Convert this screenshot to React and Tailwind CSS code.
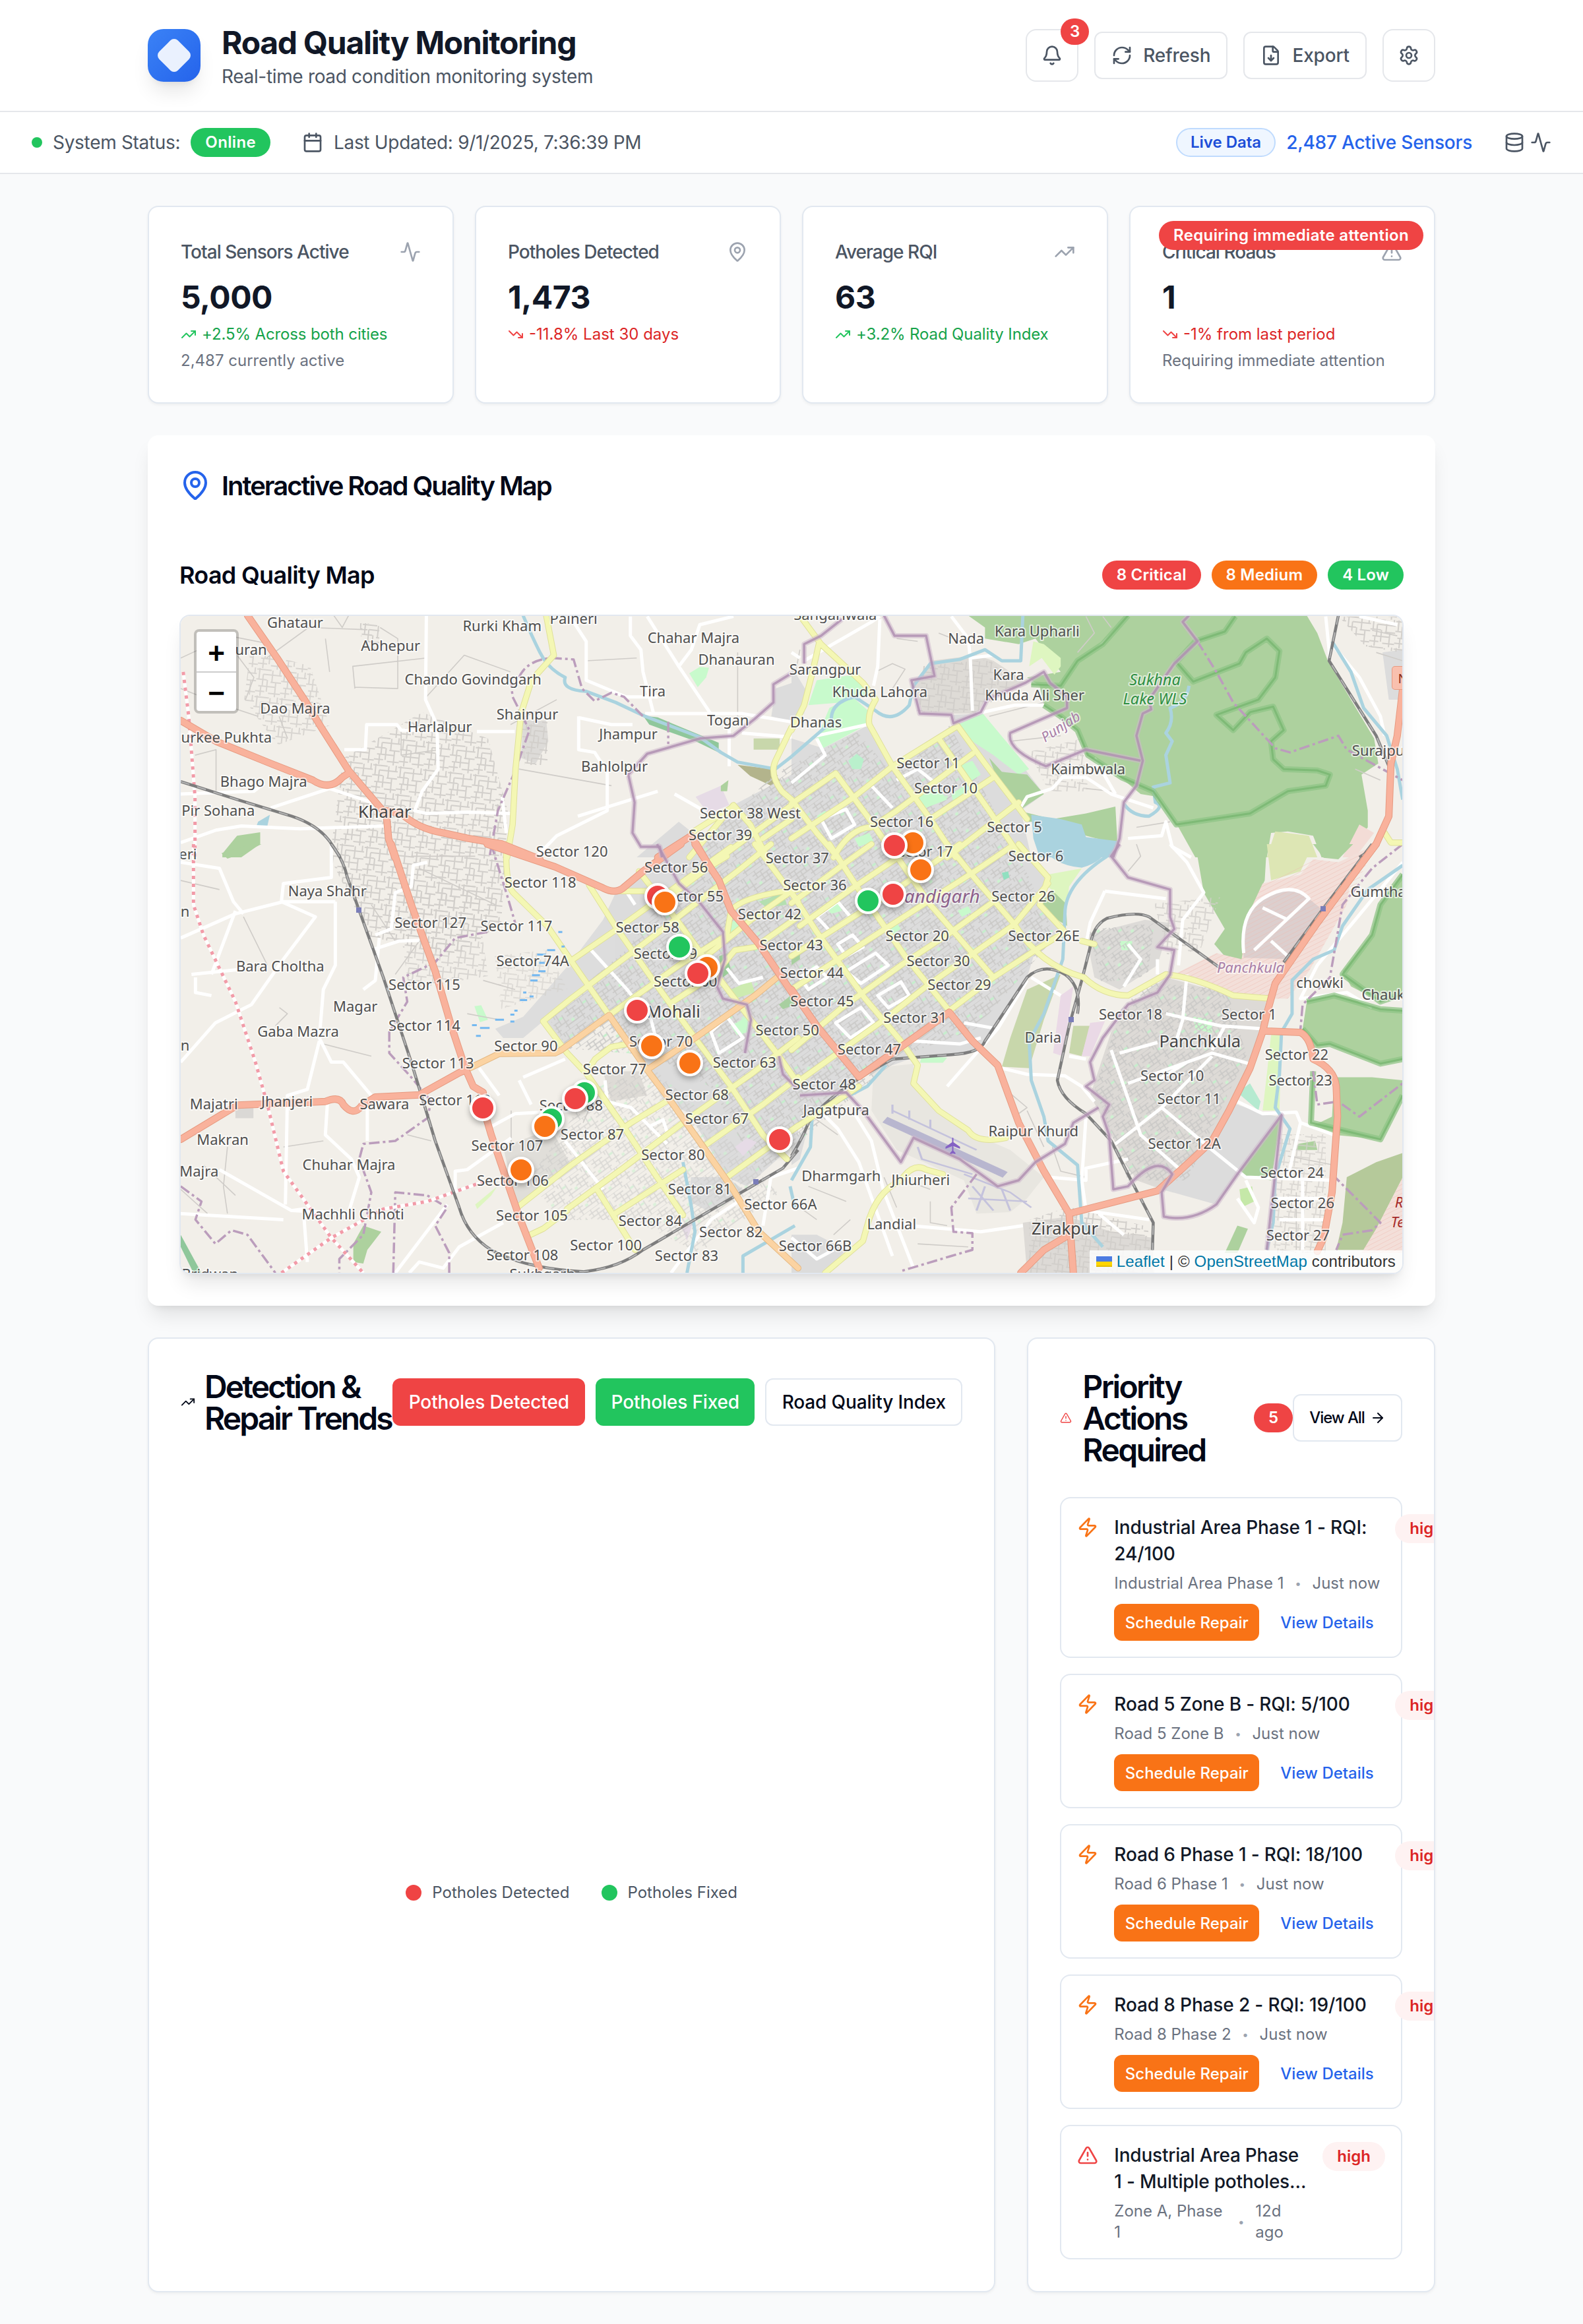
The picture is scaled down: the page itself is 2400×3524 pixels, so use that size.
import React from "react";
import {
  Activity, ArrowRight, Bell, Calendar, Database, FileDown, MapPin, RefreshCw,
  Settings, TrendingDown, TrendingUp, TriangleAlert, Zap,
} from "lucide-react";

/* Map sheets: each has its own local grid, [x origin, y origin, x scale, y scale]. */
const SHEETS = {
  nw: [200, 640, 1000 / 1568, 660 / 1568],
  ne: [1200, 640, 1000 / 1568, 660 / 1568],
  sw: [260, 1280, 950 / 1568, 720 / 1568],
  se: [1200, 1280, 1000 / 1568, 720 / 1568],
};

const AREAS = {
  nw: [
    ["M930 1075 L985 1075 L990 1150 L960 1230 L925 1210 Z", "#dddbd8"],
    ["M215 1555 L250 1490 L305 1478 L305 1520 L260 1568 L215 1568 Z", "#add19e"],
    ["M300 1440 L328 1415 L322 1455 L296 1455 Z", "#aad3df"],
    ["M1215 1058 L1250 1064 L1395 1155 L1395 1190 L1340 1150 L1230 1090 Z", "#8fc79b"],
    ["M1325 905 L1350 882 L1372 885 L1365 920 L1345 955 Z", "#c8facc"],
    ["M1440 1235 L1520 1250 L1550 1310 L1520 1310 L1470 1275 Z", "#b3b48c"],
    ["M1478 1140 L1540 1140 L1540 1180 L1478 1180 Z", "#c8d7ab"],
    ["M1340 1350 L1400 1310 L1420 1380 L1370 1410 Z", "#e6dbe6"],
    ["M1400 1310 L1418 1290 L1415 1330 L1400 1330 Z", "#add19e"],
    ["M1200 1568 L1300 1440 L1350 1500 L1430 1380 L1568 1270 L1568 1568 Z", "#dcdcdc"],
    ["M1530 960 L1568 940 L1568 1080 L1520 1060 Z", "#dcdcdc"],
  ],
  ne: [
    ["M0 1140 L75 1175 L185 1090 L240 1230 L385 1090 L380 1055 L455 1050 L600 1340 L545 1400 L570 1568 L0 1568 Z", "#dcdcdc"],
    ["M320 900 L330 860 L440 840 L480 860 L560 940 L460 1000 L440 1050 L310 1050 L290 930 Z", "#dedbd6"],
    ["M0 880 L40 980 L30 1050 L0 1060 Z", "#dcdcdc"],
    ["M800 697 L740 800 L680 860 L640 950 L590 950 L600 1020 L680 1110 L700 1200 L750 1240 L790 1290 L830 1340 L870 1350 L890 1400 L920 1460 L960 1568 L1130 1568 L1140 1480 L1180 1475 L1240 1490 L1260 1568 L1300 1568 L1340 1520 L1370 1460 L1370 1400 L1355 1270 L1395 1230 L1385 1140 L1330 1000 L1275 860 L1250 760 L1225 697 Z", "#add19e"],
    ["M420 697 L460 740 L460 780 L540 800 L580 780 L620 860 L640 900 L560 920 L590 950 L640 950 L700 850 L760 760 L800 697 Z", "#add19e"],
    ["M575 790 L600 800 L640 850 L640 880 L625 910 L595 850 L565 880 Z", "#def6c0"],
    ["M40 1020 L60 930 L150 910 L200 990 Q150 980 120 1010 Z", "#c8facc"],
    ["M75 1175 L60 1140 L90 1030 L145 990 L190 1050 L180 1090 Z", "#c8facc"],
    ["M395 1090 L455 1050 L565 1250 L540 1270 L480 1200 L410 1130 Z", "#c8facc"],
    ["M470 1210 L500 1260 L560 1270 L600 1340 L540 1400 L520 1360 L490 1290 Z", "#add19e"],
    ["M540 1400 L620 1430 L700 1410 L770 1385 L775 1520 L700 1490 L640 1440 L560 1440 Z", "#add19e"],
    ["M570 1415 L575 1500 L590 1568 L760 1568 L775 1510 L700 1495 L690 1450 L640 1430 Z", "#aad3df"],
    ["M1150 1475 L1230 1490 L1250 1568 L1130 1568 Z", "#dde6b4"],
    ["M1350 1450 L1385 1480 L1340 1568 L1310 1568 Z", "#f3dcd6"],
    ["M1405 830 L1453 820 L1453 1000 L1420 1000 Z", "#dcdcdc"],
  ],
  sw: [
    ["M1115 150 L1250 0 L1568 0 L1568 980 L1440 1130 L1390 1100 L1300 900 L1200 745 L1095 565 L975 680 L930 585 L1110 385 L1080 250 Z", "#dcdcdc"],
    ["M810 610 L880 570 L1000 390 L1080 250 L1110 280 L1110 385 L930 585 L880 640 L830 640 Z", "#dddddd"],
    ["M1200 750 L1290 750 L1400 800 L1430 870 L1310 900 L1240 850 Z", "#dcdcdc"],
    ["M1080 750 L1170 750 L1190 830 L1100 850 Z", "#dedbd6"],
    ["M1300 1100 L1390 1100 L1430 1140 L1340 1210 L1295 1180 Z", "#dcdcdc"],
    ["M830 1000 L950 940 L1000 1060 L865 1200 Z", "#e0ded9"],
    ["M160 870 L205 870 L205 905 L160 905 Z", "#dad8d5"],
    ["M125 30 L200 0 L225 0 L180 30 L140 48 Z", "#add19e"],
    ["M480 1260 L525 1280 L490 1340 L480 1385 L455 1380 L455 1320 Z", "#add19e"],
    ["M758 535 L775 532 L792 580 L772 588 Z", "#c8facc"],
    ["M760 1190 L815 1130 L800 1160 L765 1205 Z", "#def6c0"],
    ["M23 1290 L75 1416 L55 1416 L23 1330 Z", "#8fc79b"],
    ["M1275 1260 L1305 1250 L1290 1310 Z", "#e6dbe6"],
  ],
  se: [
    ["M0 0 L540 0 L610 120 L590 200 L650 290 L580 350 L560 440 L470 640 L430 690 L300 700 L160 770 L0 960 Z", "#dcdcdc"],
    ["M700 300 L840 250 L900 260 L870 400 L780 480 L720 440 Z", "#dddbd8"],
    ["M890 440 L1050 500 L1130 510 L1110 640 L1080 760 L1040 880 L980 1000 L880 1140 L820 1110 L760 960 L710 830 L760 620 L800 540 Z", "#dddad6"],
    ["M1040 850 L1120 890 L1160 900 L1100 1020 L1060 1100 L1010 1190 L880 1140 L990 1000 Z", "#dcdcdc"],
    ["M1165 900 L1060 1090 L1140 1110 Z", "#add19e"],
    ["M0 980 L40 930 L20 1040 L0 1060 Z", "#dcdcdc"],
    ["M550 1250 L660 1230 L760 1280 L860 1300 L860 1416 L560 1416 Z", "#dddad6"],
    ["M0 1290 L60 1290 L130 1340 L80 1416 L0 1416 Z", "#dcdcdc"],
    ["M195 740 L290 725 L290 790 L350 880 L420 950 L520 1010 L600 1100 L560 1170 L520 1215 L440 1220 L410 1110 L250 1010 L190 880 Z", "#e8e6e0"],
    ["M960 0 L1130 0 L1125 120 L1090 220 L1085 280 L1070 390 L1030 370 L1005 330 L1030 280 L980 160 Z", "#add19e"],
    ["M1130 0 L1240 0 L1210 90 L1140 120 Z", "#dde6b4"],
    ["M1390 0 L1300 60 L1240 50 L1210 100 L1120 130 L1090 220 L1070 380 L1010 360 L910 430 L1060 510 L1180 510 L1230 420 L1320 200 L1330 100 Z", "#f3dfd9"],
    ["M1240 0 L1335 0 L1300 50 L1265 45 Z", "#add19e"],
    ["M1075 375 Q1065 230 1120 180 Q1190 120 1230 180 L1265 220 L1180 380 Z", "#dccfce"],
    ["M1453 100 L1400 200 L1380 300 L1310 420 L1330 470 L1400 520 L1453 500 Z", "#add19e"],
    ["M1225 520 L1290 500 L1350 520 L1400 545 L1453 550 L1453 710 L1400 725 L1280 660 L1250 665 L1215 610 Z", "#add19e"],
    ["M1290 770 L1380 770 L1453 780 L1453 830 L1430 900 L1400 975 L1290 960 L1240 930 L1285 900 Z", "#add19e"],
    ["M1453 1020 L1390 1050 L1320 1100 L1310 1250 L1295 1340 L1365 1340 L1453 1100 Z", "#b5c99a"],
    ["M1453 1100 L1390 1270 L1355 1350 L1453 1350 Z", "#f3dfd9"],
    ["M590 200 L650 100 L655 270 L620 240 Z", "#add19e"],
    ["M610 100 L690 80 L660 140 L655 200 L610 140 Z", "#def6c0"],
    ["M560 480 L640 430 L600 580 L565 740 L500 735 L520 640 Z", "#c8d7ab"],
    ["M670 600 L710 600 L690 700 L660 690 Z", "#c8d7ab"],
    ["M710 590 L745 585 L710 700 L690 700 Z", "#ead9e6"],
    ["M640 500 L670 470 L645 700 L622 690 Z", "#ead9e6"],
    ["M1140 630 L1165 630 L1160 880 L1120 880 L1130 760 Z", "#def6c0"],
    ["M1060 820 L1090 790 L1115 850 L1110 880 Z", "#b5ead0"],
    ["M1205 990 L1245 980 L1250 1010 L1200 1010 Z", "#add19e"],
    ["M1060 1260 L1085 1270 L1060 1350 L1030 1350 Z", "#add19e"],
    ["M955 570 L1000 580 L1000 625 L960 610 Z", "#c8facc"],
    ["M780 320 L810 320 L810 350 L785 350 Z", "#c8facc"],
    ["M1065 1140 L1095 1130 L1100 1180 L1070 1200 Z", "#c5e8a8"],
    ["M310 700 L370 705 L360 722 L305 722 Z", "#c8facc"],
    ["M590 0 Q620 70 690 78 Q740 60 760 0 Z", "#aad3df"],
  ],
};

/* Parks that lie on top of the street texture. */
const PARKS = {
  ne: [
    ["M395 1240 L430 1220 L450 1270 L420 1300 Z", "#c8facc"],
    ["M290 1350 L350 1320 L370 1360 L310 1395 Z", "#c8facc"],
    ["M380 1340 L420 1300 L435 1330 L385 1370 Z", "#c8facc"],
    ["M135 1220 L155 1195 L172 1215 L165 1250 L145 1250 Z", "#b9f0cc"],
    ["M150 1500 L185 1480 L195 1510 L160 1530 Z", "#c8facc"],
    ["M60 1420 L80 1400 L90 1420 L70 1440 Z", "#c8facc"],
  ],
  sw: [
    ["M1400 480 L1450 450 L1460 490 L1410 510 Z", "#cdebb0"],
    ["M1400 600 L1440 570 L1445 620 L1415 630 Z", "#c8facc"],
    ["M1370 370 L1390 360 L1400 420 L1380 440 Z", "#9ccd9a"],
    ["M1390 270 L1420 240 L1430 270 L1395 310 Z", "#c8facc"],
    ["M1470 190 L1530 160 L1540 200 L1490 210 Z", "#b4dfb0"],
    ["M1520 530 L1550 500 L1560 530 L1530 545 Z", "#a8cfa0"],
    ["M1410 1000 L1440 970 L1465 985 L1430 1030 Z", "#e6dbe6"],
  ],
  se: [
    ["M80 210 L110 195 L120 220 L95 230 Z", "#c8facc"],
    ["M310 170 L340 150 L350 180 L325 195 Z", "#c8facc"],
    ["M500 95 L515 90 L518 110 L505 118 Z", "#90e0c0"],
    ["M225 280 L250 260 L260 280 L238 300 Z", "#c8facc"],
    ["M395 220 L420 205 L428 225 L405 240 Z", "#c8facc"],
    ["M0 380 L20 360 L20 380 L0 400 Z", "#a8cfa0"],
  ],
};

const LAYERS = [
  {
    color: "#cfccc8", width: 1.6,
    d: {
      nw: "M116 850 L230 770 L330 800 M320 850 L420 740 L560 748 M480 697 L500 740 L515 697 M590 740 L632 780 L632 960 L530 955 M530 960 L525 880 L700 850 M700 990 L790 840 L900 900 M1010 1000 L900 1090 M920 1250 L1140 1310 M116 960 L200 1010 L300 1060 M150 1200 L200 1180 L200 1330 M640 1110 L640 1200 L730 1180 M1080 860 L1200 850 M1440 830 L1440 1060 M250 840 L290 920 L270 1000 M350 1060 L370 1140 M460 780 L470 900",
      sw: "M23 120 L120 150 M180 240 L240 400 M260 600 L290 560 L270 540 M380 660 L500 700 M140 1000 L130 1130 L140 1220 M620 320 L560 430 M740 560 L820 580 M780 450 L860 480 M850 880 L850 1000 M590 960 L650 980 M80 1060 L160 1160 M280 1000 L380 980 M23 1140 L90 1220 M600 40 L760 40 M620 80 L810 200 M500 200 L560 320 M1000 850 L1050 860 L1030 920",
      se: "M40 1130 L130 1180 M30 880 L110 960 M220 1100 L250 1200 M290 1120 L330 1140 M560 880 L600 1000 M300 1320 L420 1330 M820 0 L830 40 L800 90 M620 1000 L640 1080 L700 1100 M330 1180 L330 1250 L370 1260 M1180 1030 L1290 1060 M1200 1150 L1200 1340 M0 1180 L60 1240 M100 1290 L140 1240 M500 800 L560 870 L530 900",
      ne: "M20 820 L10 900 M200 900 L240 870 L270 890 L240 960 M250 780 L300 790 M350 760 L400 790 M470 1060 L600 1010 M520 1150 L640 1130 M700 700 L720 760 L680 830 M740 700 L760 740 M1380 750 L1440 770 M1390 830 L1453 860 M1340 1250 L1400 1290 M700 1320 L760 1330 M820 1460 L900 1440",
    },
  },
  {
    color: "#ffffff", width: 5,
    d: {
      nw: "M700 697 L698 1000 L722 1080 M505 1180 L555 1180 L558 1090 L630 1090 L640 1110 L725 1110 M820 1115 L910 1115 M725 1080 L728 1250 L690 1330 L672 1400 L700 1410 L800 1405 M800 1405 L900 1410 M116 1515 L200 1470 L260 1455 L400 1465 L600 1455 M116 1340 L290 1330 L315 1300 M470 1320 L570 1370 M330 1390 L470 1320 M1040 697 L1080 790 L1080 930 L1175 990 L1250 990 M1185 700 L1185 770 L1210 820 L1215 900 L1240 1050 M1225 700 L1300 880 L1380 1060 M1220 1050 L1450 1050 L1568 1080 M1062 1065 L1140 1090 L1190 1090 M1062 1060 L1062 1180 L1100 1190 L1130 1260 L1130 1400 L1010 1490 L960 1568 M1420 1100 L1420 1240 M1300 880 L1330 820 L1350 730 L1430 700 M1450 1120 L1568 1135 M1060 1420 L1250 1330 M1290 1340 L1360 1400 M880 1350 L890 1480",
      ne: "M30 860 L190 720 L210 700 M210 710 L205 880 L195 950 M0 830 L20 850 M380 700 L420 780 L425 850 L430 1040 M425 850 L480 840 M60 1140 L80 1200 L0 1300 M60 1130 L180 1090 M190 1310 L240 1390 M440 1050 L530 1020 L600 1020 M640 1280 L700 1280 L760 1340 L860 1390 M540 1400 L560 1350 L620 1320 L650 1270 M800 1500 L880 1490 L890 1440 L905 1530 L950 1568 M720 1210 L770 1340 M1285 800 L1350 920 L1400 1060 L1410 1130 M1350 700 L1440 730 M1270 700 L1280 850 M250 1290 L300 1250 L350 1310 M70 1430 L130 1395 L150 1450 L95 1500 Z",
      sw: "M23 310 L160 230 L280 190 L410 190 M23 60 L120 80 L155 190 L180 230 M400 0 L400 110 L280 130 L275 190 L360 240 L280 380 L200 530 L110 590 L23 720 M410 190 L410 400 L380 480 L370 640 L400 720 L430 720 L500 830 M370 650 L340 810 L290 830 L285 1190 M100 430 L160 220 M50 430 L200 410 M60 440 L60 490 L100 500 M390 860 L385 960 L450 1040 L470 1100 L440 1230 M490 860 L490 980 M500 350 L570 320 L620 318 M510 300 L550 280 L560 160 L600 140 L605 70 L640 60 M520 310 L510 450 L480 480 M23 1220 L280 1240 M120 1075 L300 1210 L330 1205 L340 1380 M300 1210 L440 1220 M560 1416 L690 1190 M595 1416 L620 1380 L680 1400 L720 1330 L830 1250 M710 1150 L710 1080 L740 1075 L850 970 M790 940 L860 890 L1000 880 M985 980 L1080 1140 M870 780 L900 860 M985 710 L880 770 M770 740 L820 830 M1085 780 L1090 850 L1150 870 L1240 990 M1480 1260 L1500 1100 L1568 1070 M1250 1416 L1350 1240 L1430 1170 M1160 200 L1130 140 M1050 350 L1140 480 L1200 580 L1220 680 M1350 620 L1390 570 L1430 640 L1370 690 Z M1200 930 L1230 910 L1240 950 M1390 410 L1420 460 L1480 440",
      se: "M745 155 L710 260 L700 330 M745 155 L890 180 M900 0 L940 60 L980 160 L930 250 L920 400 M800 330 L830 380 L790 470 M870 380 L870 430 M890 560 L1020 600 L1120 610 M940 430 L930 580 L910 670 M760 680 L830 960 L920 1070 M800 790 L1000 690 L1100 730 M770 990 L880 870 L1000 700 M880 870 L1000 1010 L1080 1100 L1290 1110 M780 690 L870 655 M1000 680 L1030 600 M870 780 L940 720 M1060 850 L1120 890 L1200 885 L1210 920 L1290 960 M1180 1100 L1210 920 M1145 1170 L1285 1170 M1160 1240 L1270 1240 M1215 1110 L1215 1340 M1075 360 Q1065 230 1120 180 Q1190 120 1230 180 L1100 350 M1120 210 L1180 250 M1140 320 L1180 370 M500 740 L560 760 L650 765 L690 800 L720 850 M570 440 L640 500 M560 450 L490 610 L370 800 M290 650 L400 660 L450 640 M410 590 L490 610 M700 710 L660 700 M60 870 L110 940 L160 1050 L240 1360 M150 890 L190 980 L220 1150 L290 1400 M200 1250 L450 1280 L550 1260 M610 1100 L700 1110 L700 1070 L800 1040 M700 900 L690 1110 L700 1210 L850 1240 M730 1220 L790 1290 M1060 1170 L1100 1250 L1110 1200 L1080 1110 M1453 60 L1340 250 L1250 400 L1210 510 L1320 490 L1380 540 M0 1300 L60 1370 L100 1340 M590 60 L540 0 M60 240 L110 190 L140 240 L90 285 Z M110 330 L145 300 L170 340 L130 370 Z M130 420 L200 360 L230 400 L165 460 Z M205 500 L260 455 L280 500 L230 540 Z M105 590 L165 540 L195 590 L140 640 Z M20 440 L60 405 L85 440 L40 480 Z",
    },
  },
  {
    color: "#aad3df", width: 5,
    d: {
      nw: "M930 697 Q950 770 970 830 Q990 890 1030 920 Q1020 965 1080 970 L1150 1010 L1220 1060 L1350 1135 L1400 1190 L1440 1225 L1530 1250 L1568 1205",
      ne: "M945 950 Q940 1010 900 1030 Q910 1080 890 1120 L905 1150 L890 1200 L900 1300 L860 1315 L865 1370 Q890 1385 850 1420 Q810 1420 790 1375 M550 697 L545 860 L500 860 L460 820 L400 855 L330 870 L290 950 L280 1020 Q240 1090 200 1040 L150 990 Q90 1010 95 1080 L0 1205 M1285 790 L1330 900 L1360 1030 L1415 1130 L1440 1250 L1453 1360",
      se: "M750 40 Q650 130 650 230 L645 380 L630 440 L600 560 L565 650 L570 780 L600 900 L610 980 L680 1060 L690 1250 L740 1330 M1453 70 L1370 150 L1310 270 L1290 350 L1240 380 L1190 450 L1190 560 L1165 620 L1160 760 L1150 870 L1185 940 L1150 1100 L1145 1250 L1130 1340 M225 730 L180 800 L110 850 L50 880 L45 1000 L0 1110",
      sw: "M1280 1050 L1300 1190 L1310 1280 L1290 1416 M1430 1416 L1430 1360 L1560 1260 M1548 1130 L1560 1200",
    },
  },
];

const DASHES = {
  nw: "M920 920 Q940 855 1000 850 L1050 855 L1070 960 L1100 1005 L1140 975 L1170 990 L1215 1060 M900 920 L905 990 L945 1110 L910 1260 L870 1400 L850 1568 M1275 1080 L1275 1160",
  ne: "M965 790 L1010 900 L1050 1010 L1150 1175 L1185 1190 L1300 1130 L1320 1180 L1453 1290",
  sw: "M800 0 L840 170 L860 260 M790 290 L710 310 L660 390 L580 440 L590 520 L545 620 L545 690 L600 770 L650 850 L640 905 L560 980 L480 990 L470 1040 L500 1150 L480 1290 L420 1370 L420 1416 M555 1416 L560 1150 L640 1160 L690 1200 L660 1260 L695 1350 L695 1416 M23 1130 L75 1180 L60 1240 L110 1320 L150 1275 L190 1290 L260 1416",
  se: "M440 1090 L380 1200 L385 1280 L430 1285 L430 1340 L380 1360 L260 1410 M1453 0 L1380 80 L1310 200 L1280 440 M1280 440 L1215 530 L1210 610 M1240 750 L1250 860 L1300 850 L1350 900 L1453 790 M1285 1090 L1400 1250 L1380 1275 L1310 1290 L1295 1340",
};

const BORDERS = {
  nw: "M1568 905 L1525 945 L1525 1010 L1480 1070 L1430 1130 L1350 1140 L1225 1195 L1180 1270 L1195 1370 L1190 1480 L1210 1530 L1255 1530 L1260 1568",
  ne: "M220 697 L245 770 L320 770 L340 915 L285 930 L305 1050 L380 1055 L385 1085 L450 1045 L465 1000 L555 940 L600 900 L615 940 L655 990 L655 1030 L520 1120 Q510 1180 605 1240 L700 1180 L830 1220 M120 710 L70 770 L30 800 L30 870 M945 697 L930 720 L965 790 L910 870 L850 1000 L855 1035 L835 1050 L820 1130 L835 1220 L820 1310 L790 1370 L780 1500 L765 1568",
  sw: "M1215 0 L1270 130 L1320 190 L1380 290 L1385 380 L1365 470 L1380 510 L1440 530 L1450 580 L1435 690 M1520 700 L1530 760 L1568 810",
  se: "M780 0 L760 40 L800 110 L900 150 L900 240 L910 280 L870 340 L910 350 L900 430 L870 490 L800 530 L740 640 L710 720 L720 780 L700 800 L755 860 L740 900 L755 960 L765 1140 L800 1130 Q870 1020 905 1090 L880 1150 L885 1230 Q950 1250 1010 1190 L1060 1090 L1165 895 L1130 1340 M20 830 L130 820 L170 880 L260 1050 L290 970 L400 1040 L490 1130 L540 1110 L580 1050 L650 990 L670 920 L730 870",
};

const GREEN_EDGES = {
  ne: "M800 697 L740 800 L680 860 L640 950 L570 945 M600 1020 L640 1060 L680 1110 L705 1200 L785 1280 L860 1330 L915 1450 L1090 1410 L1180 1330 L1270 1310 L1280 1270 L1250 1255 L1170 1250 L1145 1215 L1140 1150 L1170 1110 L1145 1025 L1090 1045 L1050 1110 L1010 1055 L1110 1000 L1150 920 L1160 825 L1130 780 L1080 830 L1065 870 L955 935 L915 865 L960 790 L1030 755 L1055 700",
  se: "M1453 100 L1400 200 L1380 300 L1310 430 L1400 520 L1453 495 M1225 520 L1290 500 L1400 545 L1453 550 M1215 610 L1250 665 L1280 660 L1400 725 L1453 710 M1240 750 L1235 920 L1400 975 L1453 830",
};

const YELLOW = {
  nw: "M985 697 L1003 840 L950 930 L925 1050 L912 1250 L905 1450 L892 1568 M1568 1100 L1530 1220 Q1515 1270 1545 1330 L1568 1360 M1325 1568 L1430 1380 L1470 1450 L1510 1568 M1330 1480 L1430 1385 M1568 1380 L1400 1568 M1500 1500 L1568 1430",
  ne: "M20 697 L70 800 L170 940 L200 1000 Q180 1050 185 1090 L240 1240 L330 1430 L390 1568 M65 800 L50 900 L30 1020 L0 1110 M0 1375 L105 1265 L190 1440 L240 1550 M0 1500 L145 1355 L240 1240 L395 1095 L460 1230 L560 1430 M100 1568 Q140 1460 190 1460 L250 1400 L430 1195 M350 1140 L470 1400 L545 1568 M370 1568 L480 1440 L540 1370 M0 1360 L60 1480 L110 1568 M320 1440 L480 1280 M1410 1480 L1425 1515 L1453 1515",
  sw: "M838 0 Q835 130 855 160 L940 270 L1000 385 L1095 565 M930 585 L1000 510 L1210 300 L1430 75 L1500 0 M1000 385 L1110 285 L1400 10 M930 585 L990 690 L1040 760 L1130 930 L1210 1090 L1280 1225 M1045 135 L1110 270 L1200 440 L1310 640 L1400 800 L1480 960 L1540 1040 M1170 90 L1270 260 L1380 460 L1450 580 L1520 700 L1568 790 M1050 730 L1060 710 L1100 670 L1140 660 M865 1200 L1000 1060 L1150 920 L1250 840 M990 1205 L1130 1070 L1300 900 L1450 760 L1568 640 M890 1295 L930 1270 L990 1210 M1110 1220 L1280 1075 M1065 1140 L1160 1340 M1390 1100 L1568 930 M1330 1000 L1480 860 L1568 770 M1100 155 L1200 155 L1255 165 L1340 80 L1390 40 M1568 150 Q1430 170 1400 220 L1390 300 L1270 400 L1100 560 M1310 400 L1450 250 L1568 140 M1255 520 L1360 430 L1410 350 L1460 340 L1568 240 M1460 0 L1568 190",
  se: "M695 440 Q740 500 800 500 L890 430 Q960 440 1050 500 L1140 510 M530 265 Q590 400 695 440 M175 510 L260 650 L300 730 L290 790 L350 880 L420 945 Q440 990 510 970 M80 1416 L170 1310 L180 1260 Q200 1150 260 1110 Q290 1050 320 1075 L360 1090 M0 195 L130 60 L190 0 M20 270 L140 150 L300 0 M0 370 L170 220 L270 130 L400 0 M0 480 L200 300 L430 95 L520 10 M0 680 L120 540 L260 400 L380 290 L480 190 M20 780 L220 580 L320 470 L530 265 L610 130 M0 945 L160 800 M375 550 L480 440 L580 350 L650 290 M0 160 L60 290 L175 510 M90 0 L160 150 L270 370 L375 550 M230 0 L330 200 L430 360 L480 440 M370 0 L440 120 L530 265 M540 0 L610 110 L590 200 L650 290 M690 320 L720 330",
};

const TRUNK = {
  nw: "M275 697 L345 850 L410 1000 L450 1100 L515 1255 L605 1415 L610 1500 L625 1568 M116 1075 L200 1150 L330 1230 L430 1290 Q470 1330 500 1280 L518 1262 M605 1400 L640 1410 Q680 1465 740 1480 L800 1500 L880 1520 L970 1575 M1250 1568 L1330 1490 L1365 1580",
  ne: "M1453 960 L1440 1130 L1425 1230 L1420 1420 L1390 1520 L1360 1580",
  sw: "M550 0 L600 200 L660 420 L700 600 L735 740 L755 800 L780 820 L780 870 L800 960 L870 1230 L920 1400 M790 0 L960 75 L1080 145 Q1110 165 1130 145 L1180 90 L1275 0 M1310 0 L1370 120 L1400 220 L1470 330 L1568 520 M23 975 L165 862 L350 852 L385 850 Q420 830 430 860 Q455 900 475 865 L510 835 L620 828 L720 755 L738 745",
  se: "M1390 0 L1250 260 L1150 460 L1130 560 L1120 620 L1090 740 L1040 880 L1000 980 L930 1070 L870 1145 L660 1220 M0 480 L60 600 L160 768 L270 660 L375 555 L430 650 L490 730 L540 920 L600 1080 L660 1220 L670 1416 M660 1290 L600 1340 L545 1416 M1120 617 L1210 622 Q1235 640 1240 710 Q1290 740 1295 800 L1298 900 L1285 1150 L1265 1300 L1250 1345",
};

const PRIMARY = {
  sw: "M738 745 L820 692 L960 690 L975 680 L1095 565 L1190 745 L1250 850 L1320 980 L1400 1130 L1470 1280 L1568 1400 M1190 745 L1310 640 L1460 500 L1520 435",
};

const RAIL = {
  nw: "M116 1295 L250 1360 L380 1420 Q440 1450 470 1510 L495 1568",
  ne: "M1300 697 L1278 860 L1390 1130 L1420 1240 L1418 1430 L1380 1540 L1350 1568",
  sw: "M400 0 Q430 50 440 110 L470 220 L530 440 L600 720 L660 980 L720 1200 Q740 1290 800 1340 Q880 1400 1030 1412 Q1120 1400 1180 1340 L1400 1170 L1530 1070 L1568 1010",
  se: "M1020 410 L940 330 L850 240 Q820 220 750 245 Q715 270 710 340 L690 450 L660 600 L632 780 Q640 840 700 890 L760 980 L800 1090 L860 1250 L858 1340 M0 1030 Q30 960 40 920 Q90 820 240 710 L380 695 Q450 690 460 650 L560 440 Q600 390 650 430 Q690 470 680 560 M1380 0 L1260 220 L1170 390",
};

const DOTTED = {
  nw: "M122 900 L135 1060 L150 1350 L150 1568",
  sw: "M55 0 L55 200 L80 300 L160 520 L210 720 L240 860 L280 1080 L340 1190 L400 1300 L480 1416 M275 1416 L400 1300 L530 1205 L640 1180 L780 1115",
};

const MARSH = "M915 365 h22 M940 350 h20 M920 392 h14 M918 420 h18 M902 433 h20 M898 450 h18 M880 490 h8 M896 503 h10 M872 515 h18 M858 550 h8 M848 563 h10 M810 580 h22 M848 586 h10 M752 598 h12 M772 607 h24 M762 633 h12 M968 290 h10 M976 338 h8";

const LABELS = {
  nw: [
    ["Ghataur", 388, 722], ["Rurki Kham", 880, 734], ["Paineri", 1050, 708], ["uran", 283, 819], ["Abhepur", 615, 805],
    ["Chahar Majra", 1335, 778], ["Dhanauran", 1437, 855], ["Chando Govindgarh", 811, 927], ["Tira", 1238, 970],
    ["Dao Majra", 388, 1031], ["Shainpur", 940, 1053], ["Togan", 1417, 1073], ["Harlalpur", 732, 1098], ["Jhampur", 1180, 1124],
    ["Rurkee Pukhta", 214, 1136], ["Bahlolpur", 1147, 1241], ["Bhago Majra", 313, 1295], ["Pir Sohana", 205, 1400],
    ["Sector 38 West", 1470, 1408], ["Sector 39", 1399, 1488], ["Sector 120", 1046, 1547], ["eri", 133, 1556],
  ],
  ne: [
    ["Sangariwala", 104, 693], ["Kara Upharli", 584, 753], ["Nada", 415, 779], ["Sarangpur", 80, 890], ["Kara", 516, 911],
    ["Khuda Lahora", 210, 972], ["Khuda Ali Sher", 578, 984], ["Dhanas", 58, 1080], ["Sector 11", 325, 1228],
    ["Kaimbwala", 705, 1250], ["Sector 10", 367, 1319], ["Sector 16", 262, 1440], ["Sector 5", 530, 1459], ["Surajpur", 1402, 1184],
    ["Sector 17", 308, 1546],
  ],
  sw: [
    ["Sector 56", 1263, 76], ["Sector 37", 1566, 46], ["Sector 118", 923, 127], ["Naya Shahr", 390, 154], ["Sector 55", 1302, 171], ["Sector 36", 1610, 136],
    ["Sector 42", 1497, 231], ["Sector 127", 648, 259], ["Sector 117", 863, 271], ["Sector 58", 1191, 275], ["Sector 43", 1551, 333],
    ["Sector 59", 1236, 362], ["Sector 74A", 904, 386], ["Bara Choltha", 272, 402], ["Sector 44", 1602, 425], ["Sector 60", 1286, 452],
    ["Sector 115", 633, 463], ["Magar", 460, 535], ["Sector 45", 1628, 518], ["Gaba Mazra", 317, 619], ["Sector 114", 633, 598],
    ["Sector 50", 1541, 615], ["Sector 70", 1225, 651], ["Sector 90", 887, 667], ["Sector 113", 667, 722], ["Sector 63", 1434, 720],
    ["Sector 77", 1109, 743], ["Sector 68", 1315, 827], ["Majatri", 106, 859], ["Jhanjeri", 289, 850], ["Sawara", 533, 858],
    ["Sector 112", 709, 844], ["Sector 88", 1000, 863], ["Sector 67", 1365, 907], ["Sector 87", 1053, 959], ["Makran", 128, 975],
    ["Sector 107", 840, 995], ["Sector 80", 1255, 1025], ["Majra", 69, 1080], ["Chuhar Majra", 444, 1059], ["Sector 106", 854, 1110],
    ["Sector 81", 1322, 1138], ["Sector 66A", 1524, 1190], ["Machhli Chhoti", 454, 1221], ["Sector 105", 902, 1225],
    ["Sector 84", 1198, 1244], ["Sector 82", 1400, 1280], ["Sector 66B", 1611, 1326], ["Sector 100", 1087, 1325],
    ["Sector 108", 878, 1356], ["Sector 83", 1289, 1358], ["Sukhgarh", 928, 1420], ["Bridwan", 96, 1420], ["n", 34, 222], ["n", 34, 665],
  ],
  se: [
    ["Sector 6", 581, 40], ["Gumthala", 1409, 157], ["Sector 26", 551, 172], ["Sector 20", 299, 302], ["Sector 26E", 600, 302],
    ["Sector 30", 349, 385], ["Sector 29", 399, 464], ["chowki", 1256, 457], ["Chauki", 1411, 496], ["Sector 31", 294, 573],
    ["Sector 18", 806, 562], ["Sector 1", 1088, 562], ["Daria", 598, 638], ["Sector 47", 185, 677], ["Sector 22", 1201, 695],
    ["Sector 10", 905, 765], ["Sector 23", 1210, 780], ["Sector 48", 78, 793], ["Sector 11", 945, 840], ["Jagatpura", 106, 878],
    ["Raipur Khurd", 575, 948], ["Sector 12A", 934, 989], ["Sector 24", 1190, 1085], ["Dharmgarh", 118, 1096], ["Jhiurheri", 307, 1109],
    ["Sector 26", 1215, 1185], ["Landial", 238, 1255], ["Sector 27", 1204, 1291],
  ],
};

const PLACES = [
  ["nw", "Kharar", 601, 1405], ["sw", "Mohali", 1256, 553], ["se", "Panchkula", 971, 651], ["se", "Zirakpur", 650, 1270],
];

const RED = "bg-[#ef4444]";
const ORANGE = "bg-[#f97316]";
const GREEN = "bg-[#22c55e]";

const MARKERS = [
  ["sw", 1217, 173, RED], ["sw", 1235, 191, ORANGE], ["sw", 1271, 340, GREEN], ["sw", 1340, 408, ORANGE],
  ["sw", 1317, 427, RED], ["sw", 1165, 548, RED], ["sw", 1201, 666, ORANGE], ["sw", 1297, 722, ORANGE],
  ["sw", 1034, 821, GREEN], ["sw", 1010, 840, RED], ["sw", 779, 871, RED], ["sw", 951, 908, GREEN],
  ["sw", 934, 931, ORANGE], ["sw", 875, 1075, ORANGE], ["sw", 1521, 975, RED], ["ne", 289, 1515, ORANGE],
  ["ne", 245, 1525, RED], ["se", 307, 86, ORANGE], ["se", 241, 165, RED], ["se", 182, 187, GREEN],
];

const MAP_X = 274;
const MAP_Y = 934;

function project(sheet, x, y) {
  const [ox, oy, sx, sy] = SHEETS[sheet];
  return [ox + x * sx, oy + y * sy];
}

function SheetPaths({ paths, ...stroke }) {
  return Object.entries(paths).map(([sheet, d]) => {
    const [ox, oy, sx, sy] = SHEETS[sheet];
    return (
      <path key={sheet} d={d} fill="none" strokeLinejoin="round" vectorEffect="non-scaling-stroke"
        transform={`translate(${ox} ${oy}) scale(${sx} ${sy})`} {...stroke} />
    );
  });
}

function SheetAreas({ areas }) {
  return Object.entries(areas).map(([sheet, list]) => {
    const [ox, oy, sx, sy] = SHEETS[sheet];
    return (
      <g key={sheet} transform={`translate(${ox} ${oy}) scale(${sx} ${sy})`}>
        {list.map(([d, fill]) => <path key={d} d={d} fill={fill} />)}
      </g>
    );
  });
}

function MapCanvas() {
  return (
    <svg className="block h-full w-full" viewBox="274 934 1852 996" preserveAspectRatio="none">
      <defs>
        <pattern id="grid" width="44" height="30" patternUnits="userSpaceOnUse" patternTransform="rotate(-36) skewX(-4)">
          <path d="M0 0 H44 M0 6 H20 M0 12 H30 M8 18 H44 M0 24 H26 M34 24 H44 M6 0 V12 M14 6 V24 M22 12 V30 M30 0 V18 M38 6 V30 M26 0 V6" stroke="#cac9c7" strokeWidth="1.6" fill="none" />
          <rect x="31" y="8" width="6" height="3" fill="#c4efcb" />
          <rect x="3" y="19" width="5" height="4" fill="#cdf2d0" />
        </pattern>
        <pattern id="lanes" width="38" height="42" patternUnits="userSpaceOnUse" patternTransform="rotate(6)">
          <path d="M0 2 H22 M10 9 H38 M0 17 H16 M22 20 H38 M4 27 H30 M0 35 H14 M20 37 H38 M4 0 V17 M10 9 V27 M17 17 V35 M24 2 V20 M30 20 V42 M35 0 V9 M8 27 V42" stroke="#d2cfcb" strokeWidth="2" fill="none" />
        </pattern>
        <pattern id="hatch" width="12" height="12" patternUnits="userSpaceOnUse" patternTransform="rotate(55)">
          <path d="M0 0 V12" stroke="#eeb9ae" strokeWidth="1.5" />
        </pattern>
      </defs>
      <rect x="274" y="934" width="1852" height="996" fill="#f2efe9" />
      <SheetAreas areas={AREAS} />
      {/* street texture of the built-up areas */}
      <g fill="url(#grid)">
        <path d="M1030 1330 L1090 1250 L1180 1170 L1300 1110 L1350 1170 L1440 1100 L1560 1330 L1600 1420 L1480 1560 L1370 1600 L1200 1740 L1150 1780 L1080 1650 L990 1600 L860 1590 L830 1540 L950 1440 Z" />
        <path d="M900 1650 L990 1620 L1080 1700 L1180 1810 L1060 1900 L960 1850 L850 1850 L800 1790 Z" opacity=".6" />
        <path d="M1700 1530 L1740 1490 L1860 1500 L1890 1600 L1800 1790 L1710 1790 L1660 1650 Z" />
        <path d="M1650 1410 L1750 1400 L1740 1480 L1670 1490 Z" />
      </g>
      <g fill="url(#lanes)">
        <path d="M520 1150 L640 1080 L740 1120 L770 1230 L760 1400 L690 1450 L560 1420 L500 1300 Z" />
        <path d="M600 1360 L720 1340 L740 1480 L620 1500 Z" opacity=".8" />
        <path d="M380 985 L470 1010 L500 1100 L420 1130 L370 1060 Z" opacity=".8" />
        <path d="M1400 1010 L1500 1000 L1540 1040 L1480 1080 L1390 1080 Z" />
        <path d="M790 1090 L830 1095 L830 1160 L795 1160 Z" />
        <path d="M545 945 L575 945 L575 985 L550 985 Z" />
        <path d="M1560 1850 L1620 1830 L1740 1860 L1750 1930 L1560 1930 Z" />
        <path d="M750 1450 L830 1440 L860 1500 L760 1530 Z" opacity=".6" />
        <path d="M1560 1140 L1640 1120 L1650 1200 L1590 1200 Z" opacity=".8" />
        <path d="M1940 1720 L2010 1720 L2010 1900 L1930 1900 Z" opacity=".7" />
        <path d="M2030 935 L2126 935 L2126 990 L2070 980 Z" />
        <path d="M1750 1370 L1850 1360 L1820 1440 L1770 1450 Z" opacity=".8" />
      </g>
      <SheetAreas areas={PARKS} />
      <g transform="translate(1200 1280) scale(.63776 .45918)" fill="url(#hatch)">
        <path d="M1390 0 L1300 60 L1240 50 L1120 130 L1090 220 L1070 380 L1010 360 L910 430 L1060 510 L1180 510 L1230 420 L1320 200 Z" />
        <path d="M1453 1100 L1390 1270 L1355 1350 L1453 1350 Z" />
      </g>
      {LAYERS.map((layer) => (
        <SheetPaths key={layer.color} paths={layer.d} stroke={layer.color} strokeWidth={layer.width} />
      ))}
      {/* airport */}
      <g transform="translate(1200 1280) scale(.63776 .45918)" fill="none" stroke="#c4c2dc">
        <path d="M222 910 L508 1092" stroke="#b8b6cf" strokeWidth="22" />
        <path d="M240 880 L440 1010 M240 860 V890 M280 880 V910 M330 910 V940 M410 1090 L520 1150 L570 1200 M430 1130 L480 1210 M460 1130 L440 1210 M500 1140 L520 1210 M420 1170 L560 1180 M300 1000 L310 1040 L430 1090" strokeWidth="5" />
      </g>
      <SheetPaths paths={GREEN_EDGES} stroke="#8fc486" strokeWidth="9" strokeOpacity=".75" />
      <SheetPaths paths={GREEN_EDGES} stroke="#74b36c" strokeWidth="3" strokeOpacity=".7" />
      <SheetPaths paths={DASHES} stroke="#bb9dbc" strokeWidth="3.5" strokeDasharray="16 5 4 5" />
      <SheetPaths paths={DOTTED} stroke="#ffffff" strokeWidth="5" />
      <SheetPaths paths={DOTTED} stroke="#f29ba8" strokeWidth="5" strokeDasharray="5 7" />
      <SheetPaths paths={RAIL} stroke="#7d7d7d" strokeWidth="4.5" />
      <SheetPaths paths={RAIL} stroke="#b5b5b5" strokeWidth="2" strokeDasharray="14 12" />
      <SheetPaths paths={YELLOW} stroke="#dfe09a" strokeWidth="9.5" strokeLinecap="round" />
      <SheetPaths paths={YELLOW} stroke="#f4f7b4" strokeWidth="7.5" strokeLinecap="round" />
      <SheetPaths paths={PRIMARY} stroke="#e5b983" strokeWidth="10" strokeLinecap="round" />
      <SheetPaths paths={PRIMARY} stroke="#fbd3a2" strokeWidth="8" strokeLinecap="round" />
      <SheetPaths paths={TRUNK} stroke="#e79a80" strokeWidth="11" strokeLinecap="round" />
      <SheetPaths paths={TRUNK} stroke="#f9b29c" strokeWidth="9" strokeLinecap="round" />
      <SheetPaths paths={BORDERS} stroke="#cdb8cc" strokeWidth="8" strokeOpacity=".55" />
      <SheetPaths paths={BORDERS} stroke="#b090b1" strokeWidth="3.5" strokeOpacity=".85" />
      <SheetPaths paths={{ sw: MARSH }} stroke="#74b8f0" strokeWidth="3" />
      <g fill="#7a7db8">
        <rect x="540" y="1376" width="8" height="8" />
        <rect x="1142" y="1788" width="8" height="8" />
        <rect x="1620" y="1542" width="8" height="8" />
        <rect x="2002" y="1374" width="8" height="8" />
      </g>
      <g transform="translate(1434.5 1726)">
        <path d="M11 0 v6 l10 7 v3 l-10-4 v7 l3 3 v2 l-4-1 -4 1 v-2 l3-3 v-7 l-10 4 v-3 l10-7 v-6 q1-2 2 0 Z" fill="#8461c4" />
      </g>
      <g fontFamily="'Noto Sans', 'Open Sans', sans-serif" textAnchor="middle" paintOrder="stroke" strokeLinejoin="round">
        <g fontSize="22" fill="#4f4f4f" stroke="#ffffff" strokeOpacity=".65" strokeWidth="4">
          {Object.entries(LABELS).flatMap(([sheet, labels]) =>
            labels.map(([text, lx, ly]) => {
              const [x, y] = project(sheet, lx, ly);
              return <text key={sheet + text + ly} x={x} y={y + 8}>{text}</text>;
            })
          )}
        </g>
        <g fontSize="25.5" fill="#444444" stroke="#ffffff" strokeOpacity=".65" strokeWidth="4">
          {PLACES.map(([sheet, text, lx, ly]) => {
            const [x, y] = project(sheet, lx, ly);
            return <text key={text} x={x} y={y + 9}>{text}</text>;
          })}
        </g>
        <g fontStyle="italic" stroke="#ffffff" strokeOpacity=".6" strokeWidth="4">
          <text x="1412" y="1369" fontSize="28" fill="#8d618b">Chandigarh</text>
          <text x="1896" y="1475" fontSize="22" fill="#a97fa8">Panchkula</text>
          <text fontSize="21" fill="#a97fa8" transform="translate(1612 1108) rotate(-33)">Punjab</text>
          <text x="1751" y="1039" fontSize="23.5" fill="#2f8f43">Sukhna</text>
          <text x="1751" y="1068" fontSize="23.5" fill="#2f8f43">Lake WLS</text>
        </g>
        <g fontStyle="italic" fontSize="22" fill="#a52a2a">
          <text x="2121" y="1831">R</text>
          <text x="2119" y="1861">Te</text>
        </g>
        <rect x="2111" y="1011" width="30" height="34" rx="4" fill="#f9c0ae" stroke="#e79a80" strokeWidth="2" />
        <text x="2127" y="1036" fontSize="20" fill="#8a2f1b">N</text>
      </g>
    </svg>
  );
}

function RoadMap() {
  return (
    <div className="relative h-[1000px] overflow-hidden rounded-2xl border-2 border-[#e2e8f0] shadow-[0_20px_30px_-6px_rgba(0,0,0,0.1),0_8px_12px_-8px_rgba(0,0,0,0.1)]">
      <MapCanvas />
      {MARKERS.map(([sheet, mx, my, tone]) => {
        const [x, y] = project(sheet, mx, my);
        return (
          <span key={`${sheet}${mx}${my}`}
            className={`absolute size-10 -translate-x-1/2 -translate-y-1/2 rounded-full border-4 border-white shadow-[0_4px_8px_rgba(0,0,0,0.3)] ${tone}`}
            style={{ left: x - MAP_X, top: y - MAP_Y }} />
        );
      })}
      <div className="absolute left-5 top-5 w-[68px] overflow-hidden rounded-lg border-4 border-black/20 bg-white bg-clip-padding font-['Liberation_Sans'] text-[44px] font-bold text-black">
        <div className="flex h-[62px] items-center justify-center border-b-2 border-[#ccc] pt-1.5 leading-none">+</div>
        <div className="flex h-[58px] items-center justify-center pt-1 leading-none">−</div>
      </div>
      <div className="absolute bottom-0 right-0 flex h-[34px] items-center bg-white/80 px-2.5 font-['Liberation_Sans'] text-[24px] tracking-[0.15px] text-[#333]">
        <svg className="mr-[7px] h-4 w-6" viewBox="0 0 12 8"><path fill="#4C7BE1" d="M0 0h12v4H0z" /><path fill="#FFD500" d="M0 4h12v3H0z" /><path fill="#E0BC00" d="M0 7h12v1H0z" /></svg>
        <p className="whitespace-pre"><span className="text-[#0078A8]">Leaflet</span> | © <span className="text-[#0078A8]">OpenStreetMap</span> contributors</p>
      </div>
    </div>
  );
}

function Pill({ className, children }) {
  return (
    <span className={`inline-flex h-11 shrink-0 items-center whitespace-nowrap rounded-full text-[24px] font-semibold leading-8 ${className}`}>
      {children}
    </span>
  );
}

const STATS = [
  { label: "Total Sensors Active", icon: Activity, value: "5,000", up: true, trend: "+2.5% Across both cities", note: "2,487 currently active" },
  { label: "Potholes Detected", icon: MapPin, value: "1,473", up: false, trend: "-11.8% Last 30 days" },
  { label: "Average RQI", icon: TrendingUp, value: "63", up: true, trend: "+3.2% Road Quality Index" },
  { label: "Critical Roads", icon: TriangleAlert, value: "1", up: false, trend: "-1% from last period", note: "Requiring immediate attention", badge: "Requiring immediate attention" },
];

function StatCard({ label, icon: Icon, value, up, trend, note, badge }) {
  const Trend = up ? TrendingUp : TrendingDown;
  return (
    <div className="relative h-[300px] rounded-2xl border-2 border-[#e2e8f0] bg-white p-12 shadow-[0_2px_4px_rgba(0,0,0,0.05)]">
      <div className="flex items-center justify-between">
        <h3 className="text-[28px] font-medium leading-10 tracking-[-0.035em] text-[#4b5563]">{label}</h3>
        <Icon className="size-8 text-[#9ca3af]" />
      </div>
      <p className="mt-4 pt-0.5 text-[48px] font-bold leading-[62px] tracking-[-0.01em] text-[#111827]">{value}</p>
      <p className={`mt-2 flex items-center gap-2 pt-0.5 text-[24px] leading-[30px] ${up ? "tracking-[-0.005em] text-[#16a34a]" : "text-[#dc2626]"}`}>
        <Trend className={`size-6 ${up ? "text-[#22c55e]" : "text-[#ef4444]"}`} />
        {trend}
      </p>
      {note && <p className="mt-2 pt-0.5 text-[24px] leading-[30px] text-[#6b7280]">{note}</p>}
      {badge && <Pill className="absolute right-4 top-[21px] bg-[#ef4444] px-[22px] tracking-[0.014em] text-white">{badge}</Pill>}
    </div>
  );
}

const ACTIONS = [
  { title: "Industrial Area Phase 1 - RQI: 24/100", place: "Industrial Area Phase 1", time: "Just now" },
  { title: "Road 5 Zone B - RQI: 5/100", place: "Road 5 Zone B", time: "Just now" },
  { title: "Road 6 Phase 1 - RQI: 18/100", place: "Road 6 Phase 1", time: "Just now" },
  { title: "Road 8 Phase 2 - RQI: 19/100", place: "Road 8 Phase 2", time: "Just now" },
];

function Dot() {
  return <span className="w-[11px] shrink-0 text-center text-[17px] text-[#9ca3af]">•</span>;
}

function ActionItem({ title, place, time }) {
  return (
    <li className="flex gap-6 rounded-2xl border-2 border-[#e2e8f0] p-6">
      <Zap className="mt-1 size-8 shrink-0 text-[#f97316]" />
      <div className="flex gap-4">
        <div className="w-[410px] shrink-0">
          <h4 className="text-[28px] font-medium leading-10 tracking-[-0.005em] text-[#111827]">{title}</h4>
          <p className="mt-2 flex items-center gap-4 pt-0.5 text-[24px] leading-[30px] text-[#6b7280]">
            {place}<Dot />{time}
          </p>
          <div className="mt-4 flex gap-4 text-[24px] font-medium">
            <button className="h-14 w-[220px] rounded-xl bg-[#f97316] pt-0.5 text-white">Schedule Repair</button>
            <button className="h-14 px-4 pt-0.5 text-[#2563eb]">View Details</button>
          </div>
        </div>
        <Pill className="bg-[#fef2f2] px-[22px] text-[#dc2626]">high</Pill>
      </div>
    </li>
  );
}

export default function App() {
  return (
    <div className="h-[3524px] w-[2400px] overflow-hidden bg-[#f9fafb] font-['Inter',sans-serif] text-[#020817]">
      <header className="border-b-2 border-[#e5e7eb] bg-white">
        <div className="mx-auto flex h-[168px] w-[1952px] items-center justify-between">
          <div className="flex items-center gap-8">
            <div className="flex size-20 items-center justify-center rounded-[24px] bg-linear-to-br from-[#3b82f6] to-[#2563eb] shadow-[0_20px_30px_-6px_rgba(0,0,0,0.1),0_8px_12px_-8px_rgba(0,0,0,0.1)]">
              <div className="size-10 rotate-45 rounded-lg bg-white/90" />
            </div>
            <div>
              <h1 className="pt-0.5 text-[48px] font-bold leading-[62px] tracking-[-0.027em] text-[#111827]">Road Quality Monitoring</h1>
              <p className="text-[28px] leading-10 tracking-[-0.012em] text-[#4b5563]">Real-time road condition monitoring system</p>
            </div>
          </div>
          <div className="flex items-center gap-6 text-[28px] font-medium tracking-[-0.006em] text-[#4b5563]">
            <button className="relative flex size-20 items-center justify-center rounded-2xl border-2 border-[#e5e7eb]">
              <Bell className="size-8" />
              <span className="absolute -right-[18px] -top-[18px] flex h-10 w-[43px] items-center justify-center rounded-full bg-[#ef4444] text-[24px] font-semibold text-white">3</span>
            </button>
            <button className="flex h-[72px] items-center gap-4 rounded-xl border-2 border-[#e5e7eb] px-6"><RefreshCw className="size-8" />Refresh</button>
            <button className="flex h-[72px] items-center gap-4 rounded-xl border-2 border-[#e5e7eb] px-6"><FileDown className="size-8" />Export</button>
            <button className="flex size-20 items-center justify-center rounded-2xl border-2 border-[#e5e7eb]"><Settings className="size-8" /></button>
          </div>
        </div>
      </header>

      <div className="flex h-[94px] items-center justify-between border-b-2 border-[#e5e7eb] bg-white px-12 text-[28px] tracking-[-0.011em] text-[#4b5563]">
        <div className="flex items-center gap-12">
          <div className="flex items-center gap-4">
            <span className="size-4 rounded-full bg-[#22c55e]" />
            System Status:
            <Pill className="bg-[#22c55e] px-[22px] tracking-[0.014em] text-white">Online</Pill>
          </div>
          <div className="flex items-center gap-4"><Calendar className="size-8" />Last Updated: 9/1/2025, 7:36:39 PM</div>
        </div>
        <div className="flex items-center gap-12">
          <div className="flex items-center gap-4">
            <Pill className="border-2 border-[#bfdbfe] bg-[#eff6ff] px-5 tracking-normal text-[#1d4ed8]">Live Data</Pill>
            <span className="font-medium tracking-[-0.008em] text-[#2563eb]">2,487 Active Sensors</span>
          </div>
          <div className="flex gap-2"><Database className="size-8" /><Activity className="size-8" /></div>
        </div>
      </div>

      <main className="mx-auto flex w-[1952px] flex-col gap-12 py-12">
        <section className="grid grid-cols-4 gap-8">
          {STATS.map((s) => <StatCard key={s.label} {...s} />)}
        </section>

        <section className="h-[1320px] rounded-2xl bg-white p-12 shadow-[0_20px_30px_-6px_rgba(0,0,0,0.1),0_8px_12px_-8px_rgba(0,0,0,0.1)]">
          <div className="flex h-14 items-center gap-4">
            <MapPin className="size-12 text-[#2563eb]" />
            <h2 className="pt-0.5 text-[40px] font-semibold tracking-[-0.051em]">Interactive Road Quality Map</h2>
          </div>
          <div className="mb-8 mt-20 flex h-14 items-center justify-between">
            <h3 className="text-[36px] font-semibold tracking-[-0.0195em]">Road Quality Map</h3>
            <div className="flex gap-4 tracking-[0.01em]">
              <Pill className="bg-[#ef4444] px-[22px] text-white">8 Critical</Pill>
              <Pill className="bg-[#f97316] px-[22px] text-white">8 Medium</Pill>
              <Pill className="bg-[#22c55e] px-[22px] text-white">4 Low</Pill>
            </div>
          </div>
          <RoadMap />
        </section>

        <section className="grid h-[1448px] grid-cols-3 gap-12">
          <div className="col-span-2 rounded-2xl border-2 border-[#e2e8f0] bg-white p-12 shadow-[0_2px_4px_rgba(0,0,0,0.05)]">
            <div className="flex h-24 items-center justify-between">
              <div className="flex items-center gap-3.5">
                <TrendingUp className="w-[22px] shrink-0" />
                <h2 className="whitespace-nowrap pt-0.5 text-[48px] font-semibold leading-none tracking-[-0.061em]">Detection &amp;<br />Repair Trends</h2>
              </div>
              <div className="flex shrink-0 gap-4 text-[28px] font-medium tracking-[-0.005em]">
                <button className="h-[72px] w-[292px] rounded-xl bg-[#ef4444] text-white">Potholes Detected</button>
                <button className="h-[72px] w-[241px] rounded-xl bg-[#22c55e] text-white">Potholes Fixed</button>
                <button className="h-[72px] w-[299px] rounded-xl border-2 border-[#e2e8f0]">Road Quality Index</button>
              </div>
            </div>
            <div className="mt-[680px] flex justify-center gap-12 text-[24px] leading-8 text-[#4b5563]">
              <span className="flex items-center gap-4"><i className="size-6 rounded-full bg-[#ef4444]" />Potholes Detected</span>
              <span className="flex items-center gap-4"><i className="size-6 rounded-full bg-[#22c55e]" />Potholes Fixed</span>
            </div>
          </div>

          <div className="overflow-hidden rounded-2xl border-2 border-[#e2e8f0] bg-white p-12 shadow-[0_2px_4px_rgba(0,0,0,0.05)]">
            <div className="flex h-36 items-center">
              <TriangleAlert className="mr-4 w-[18px] shrink-0 text-[#ef4444]" />
              <h2 className="flex-1 pt-0.5 text-[48px] font-semibold leading-none tracking-[-0.055em]">Priority<br />Actions<br />Required</h2>
              <Pill className="w-[59px] justify-center bg-[#ef4444] text-white">5</Pill>
              <button className="flex h-[72px] w-[166px] items-center justify-center gap-2 rounded-xl border-2 border-[#e2e8f0] text-[24px] font-medium tracking-[-0.045em]">
                View All<ArrowRight className="size-6" />
              </button>
            </div>
            <ul className="mt-12 flex flex-col gap-6">
              {ACTIONS.map((a) => <ActionItem key={a.title} {...a} />)}
              <li className="flex gap-6 rounded-2xl border-2 border-[#e2e8f0] p-6">
                <TriangleAlert className="mt-1 size-8 shrink-0 text-[#ef4444]" />
                <div className="flex flex-1 items-start justify-between">
                  <div className="whitespace-nowrap">
                    <h4 className="text-[28px] font-medium leading-10 tracking-[-0.008em] text-[#111827]">Industrial Area Phase<br />1 - Multiple potholes…</h4>
                    <p className="-mb-px mt-[9px] flex items-center gap-4 text-[24px] leading-8 text-[#6b7280]">
                      <span className="w-[171px]">Zone A, Phase<br />1</span><Dot /><span>12d<br />ago</span>
                    </p>
                  </div>
                  <Pill className="bg-[#fef2f2] px-[22px] text-[#dc2626]">high</Pill>
                </div>
              </li>
            </ul>
          </div>
        </section>
      </main>
    </div>
  );
}
